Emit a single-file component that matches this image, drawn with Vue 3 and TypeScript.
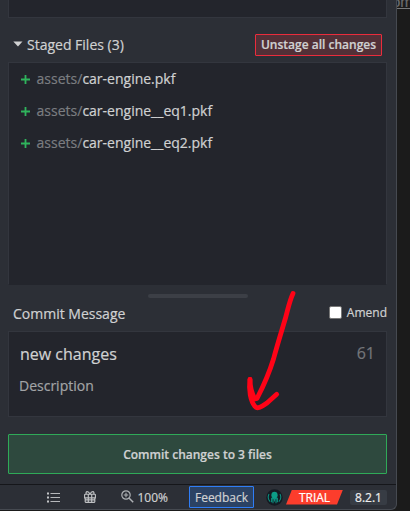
<script setup lang="ts">
interface StagedFile {
  folder: string
  name: string
}

const files: StagedFile[] = [
  { folder: 'assets/', name: 'car-engine.pkf' },
  { folder: 'assets/', name: 'car-engine__eq1.pkf' },
  { folder: 'assets/', name: 'car-engine__eq2.pkf' },
]
</script>

<template>
  <div class="screen">
    <main class="panel">
      <div class="content">
        <section class="box unstaged"></section>

        <header class="staged-head">
          <svg class="caret" viewBox="0 0 10 6"><path d="M.3.5h9.2L5 5.4z" fill="#d0d1d2" /></svg>
          <h2 class="title staged-title">Staged Files (3)</h2>
          <button class="unstage">Unstage all changes</button>
        </header>

        <ul class="box files">
          <li v-for="file in files" :key="file.name" class="file">
            <svg class="plus" viewBox="0 0 9 9"><path d="M4.5 0v9M0 4.5h9" stroke="#2fb45c" stroke-width="1.8" /></svg>
            <span class="path"><span class="folder">{{ file.folder }}</span>{{ file.name }}</span>
          </li>
        </ul>

        <div class="handle-row"><span class="handle"></span></div>

        <header class="message-head">
          <h2 class="title message-title">Commit Message</h2>
          <label class="amend"><span class="check"></span><span class="amend-text">Amend</span></label>
        </header>

        <section class="box message">
          <div class="summary"><span class="summary-text">new changes</span><span class="count">61</span></div>
          <div class="description">Description</div>
        </section>

        <button class="commit"><span>Commit changes to 3 files</span></button>
      </div>

      <footer class="status">
        <svg class="list" viewBox="0 0 13 11">
          <path d="M0 1.5h2M0 5.5h2M0 9.5h2" stroke="#c4c6c8" stroke-width="2" />
          <path d="M3.5 1.5H13M3.5 5.5H13M3.5 9.5H13" stroke="#b6b8bb" stroke-width="1.2" />
        </svg>
        <svg class="gift" viewBox="0 0 12 12" fill="none" stroke="#bfc1c3" stroke-width="1.15">
          <path d="M1.2 3.2h9.6l.6.6v3H.6v-3zM1.2 7v3.8l.6.6h8.4l.6-.6V7M4.3 3.2v8M7.7 3.2v8M1 8.9h10" />
          <path d="M6 3.2C5.2 1.4 4.3.6 3.2.6S1.6 2.2 2.4 3.2M6 3.2C6.8 1.4 7.700.6 8.800.6s1.600 1.600.8 2.600" />
        </svg>
        <svg class="lens" viewBox="0 0 13 13" fill="none" stroke="#aeb1b4">
          <circle cx="5" cy="5" r="4.2" stroke-width="1.2" />
          <path d="M5 2.8v4.4M2.8 5h4.4" stroke-width="1.1" />
          <path d="M8.2 8.2l4 4" stroke-width="1.5" />
        </svg>
        <span class="zoom">100%</span>
        <button class="feedback"><span>Feedback</span></button>
        <svg class="kraken" viewBox="0 0 17 17">
          <circle cx="8.5" cy="8.5" r="8.2" fill="#141a22" />
          <path d="M5.3 6.4C5.3 3.8 6.700 2.700 8.500 2.700s3.200 1.100 3.200 3.700c0 1-.9 1.600-.9 2.500v1.400H6.200V8.900c0-.9-.9-1.500-.9-2.500z" fill="#0c9c87" />
          <path d="M7 9v5.200M8.500 9v3.400M10 9v5.200M5.600 8.700v4.600M11.400 8.700v4.600M4.200 12.700C2.300 10.700 1.500 8 3 5M12.800 12.700c1.900-2 2.700-4.700 1.200-7.700" fill="none" stroke="#0b9180" stroke-width="1.05" />
        </svg>
        <span class="trial"><span>TRIAL</span></span>
        <span class="version"><span>8.2.1</span></span>
      </footer>
    </main>

    <aside class="behind"><span class="link">om</span></aside>

    <svg class="arrow" viewBox="0 0 410 511" fill="none" stroke="#ff0317" stroke-width="4.8" stroke-linecap="round" stroke-linejoin="round">
      <path d="M293 293.500C289.500 301 288 309 285.500 318C281 333 277 346 273.500 359C269.500 372 263.500 386 257 398.500L255 399" />
      <path d="M250 379.300C250 387 252 393.500 254.500 398.500" />
      <path d="M250 379.300C248.500 390 250.500 401 255 406.500C257 409.500 262 406.500 267 403L276.700 394.300" />
    </svg>
  </div>
</template>

<style>
body {
  margin: 0;
  background: #1b1b1b;
}
</style>

<style scoped>
.screen {
  position: relative;
  display: flex;
  width: 410px;
  height: 511px;
  overflow: hidden;
  background: #1b1b1b;
  color: #d0d1d2;
  font-family: "Open Sans", "Noto Sans", sans-serif;
  font-size: 14px;
  -webkit-text-stroke: 0.2px;
}

.screen * {
  box-sizing: border-box;
}

.panel {
  display: flex;
  flex-direction: column;
  width: 397px;
  height: 510px;
  background: #2c2f36;
  border-right: 1px solid #464a51;
  border-bottom: 1px solid #464a51;
  border-radius: 0 0 6px 0;
}

.content {
  height: 484px;
  padding: 0 9px 0 8px;
}

.box {
  width: 379px;
  background: #23252c;
  border: 1px solid #33363e;
}

.unstaged {
  height: 18px;
  border-top: 0;
}

.staged-head {
  display: flex;
  align-items: center;
  height: 44px;
  padding: 9px 5px 0;
}

.caret {
  width: 10px;
  height: 6px;
  margin-top: -1px;
}

.title {
  margin: 0;
  font-size: 14px;
  line-height: 20px;
  font-weight: 400;
  white-space: nowrap;
}

.staged-title {
  margin-left: 4px;
}

button {
  display: flex;
  align-items: center;
  justify-content: center;
  padding: 0;
  border-radius: 1px;
  color: #d0d1d2;
  font-family: inherit;
  white-space: nowrap;
}

.unstage {
  width: 127px;
  height: 22px;
  margin-left: auto;
  padding-bottom: 1px;
  background: #523037;
  border: 1px solid #eb2c3c;
  font-size: 12px;
  font-weight: 600;
  -webkit-text-stroke: 0.2px;
}

.files {
  height: 223px;
  margin: 0;
  padding: 0 0 0 12px;
  border-bottom-color: #23252c;
  list-style: none;
}

.file {
  display: flex;
  align-items: center;
  height: 32px;
}

.plus {
  width: 9px;
  height: 9px;
}

.path {
  margin-left: 6.600px;
  line-height: 20px;
  white-space: nowrap;
}

.folder {
  color: #7b7d81;
}

.handle-row {
  display: flex;
  justify-content: center;
  height: 17px;
  padding-top: 9px;
}

.handle {
  width: 100px;
  height: 4px;
  border-radius: 2px;
  background: #3c3f46;
}

.message-head {
  display: flex;
  justify-content: space-between;
  height: 29px;
  padding-left: 5px;
}

.message-title {
  margin-top: 2px;
}

.amend {
  display: flex;
  align-items: center;
  height: 20px;
  font-size: 12px;
}

.check {
  width: 13px;
  height: 13px;
  margin-right: 5px;
  border: 1px solid #777;
  border-radius: 2px;
  background: #fff;
}

.message {
  height: 86px;
  padding: 11px 11px 0;
}

.summary {
  display: flex;
  justify-content: space-between;
  height: 22px;
  font-size: 16px;
  line-height: 22px;
}

.count {
  margin-top: -1px;
  color: #74767a;
}

.description {
  margin: 11px 0 0 -1px;
  line-height: 20px;
  color: #a2a4a6;
}

.commit {
  width: 379px;
  height: 40px;
  margin-top: 17px;
  background: #2e493e;
  border: 1px solid #2faa58;
  font-size: 12px;
  font-weight: 600;
  -webkit-text-stroke: 0.2px;
}

.status {
  display: flex;
  align-items: center;
  height: 25px;
  padding-left: 47px;
  border-top: 1px solid #15161a;
  font-size: 12px;
}

.list {
  width: 13px;
  height: 11px;
}

.gift {
  width: 12px;
  height: 12px;
  margin-left: 24px;
}

.lens {
  width: 13px;
  height: 13px;
  margin-left: 25px;
  margin-bottom: 2px;
}

.zoom {
  width: 30px;
  margin-left: 3.500px;
  margin-right: 0.500px;
}

.feedback {
  width: 65px;
  height: 22px;
  margin-left: 21px;
  background: #2b4264;
  border: 1px solid #2f7df6;
  font-size: 12px;
}

.kraken {
  width: 17px;
  height: 17px;
  margin-left: 12px;
}

.trial {
  display: flex;
  align-items: center;
  justify-content: center;
  width: 57px;
  height: 15px;
  margin-left: 3px;
  clip-path: polygon(6px 0, 100% 0, 51px 100%, 0 100%);
  background: #fc3d2c;
  color: #fff;
}

.version {
  display: flex;
  align-items: center;
  justify-content: center;
  width: 37px;
  height: 15px;
  margin-left: 7px;
  border-radius: 2px;
  background: #373c44;
  color: #eee;
}

.behind {
  display: flex;
  align-items: flex-start;
  width: 13px;
  height: 9px;
  overflow: hidden;
  border-bottom: 1px solid #77797b;
  color: #6c6d6f;
  font-family: "Liberation Sans", sans-serif;
  font-size: 15px;
}

.link {
  margin-top: -7px;
  margin-left: -5px;
  line-height: 18px;
}

.arrow {
  position: absolute;
  inset: 0;
  width: 410px;
  height: 511px;
  pointer-events: none;
}
</style>
